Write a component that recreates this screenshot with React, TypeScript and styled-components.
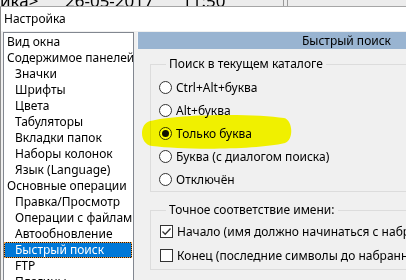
import React from "react";
import styled, { createGlobalStyle } from "styled-components";

const GlobalStyle = createGlobalStyle`
  html, body { margin: 0; padding: 0; background: #f0f0f0; }
  body { font-family: "Noto Sans", "Open Sans", sans-serif; font-size: 12px; color: #000; }
  #root { width: 406px; height: 280px; overflow: hidden; }
`;

const Page = styled.div`
  position: relative;
  width: 406px;
  height: 280px;
  overflow: hidden;
  display: flex;
  flex-direction: column;
  background: #f0f0f0;
`;

const TopStrip = styled.div`
  height: 6px;
  flex: none;
  background: #ececec;
  border-bottom: 1px solid #a6a6a6;
  display: flex;
  align-items: flex-end;
  overflow: hidden;
`;

const StripText = styled.span<{ $w: number }>`
  flex: none;
  width: ${(p) => p.$w}px;
  font-family: "Noto Sans", sans-serif;
  font-size: 17px;
  line-height: 10px;
  height: 10px;
  white-space: nowrap;
  overflow: hidden;
`;

const StripDivider = styled.div`
  flex: none;
  width: 3px;
  height: 6px;
  border-left: 1px solid #9a9a9a;
  border-right: 1px solid #9a9a9a;
`;

const Dialog = styled.div`
  flex: 1;
  display: flex;
  flex-direction: column;
  border-left: 1px solid #8c8c8c;
  min-height: 0;
`;

const TitleBar = styled.div`
  height: 24px;
  flex: none;
  background: #ffffff;
  display: flex;
  align-items: center;
  padding-left: 3px;
  padding-bottom: 1px;
  box-sizing: border-box;
  font-size: 12px;
`;

const Body = styled.div`
  flex: 1;
  display: flex;
  padding: 1px 0 0 2px;
  gap: 3px;
  min-height: 0;
`;

const Tree = styled.div`
  width: 131px;
  flex: none;
  background: #ffffff;
  border: 1px solid #828790;
  border-bottom: none;
  box-sizing: border-box;
  padding-top: 1px;
  overflow: hidden;
  display: flex;
  flex-direction: column;
`;

const TreeItem = styled.div<{ $level: number; $selected?: boolean }>`
  flex: none;
  height: 16px;
  line-height: 14px;
  box-sizing: border-box;
  margin-right: 1px;
  padding-left: ${(p) => (p.$level ? 10 : 2)}px;
  white-space: nowrap;
  border: 1px solid transparent;
  color: ${(p) => (p.$selected ? "#ffffff" : "#000000")};
  ${(p) =>
    p.$selected
      ? `border: 1px dotted #f5a040;
         background: linear-gradient(#0078d7, #0078d7) padding-box, #1a1a1a border-box;`
      : ""}
`;

const Right = styled.div`
  flex: 1;
  min-width: 0;
  display: flex;
  flex-direction: column;
  overflow: hidden;
`;

const Header = styled.div`
  height: 17px;
  flex: none;
  background: #99b4d1;
  border-left: 1px solid #f4f6f9;
  display: flex;
  align-items: center;
  justify-content: flex-end;
  padding-right: 15px;
  font-size: 12px;
`;

const Content = styled.div`
  padding-left: 13px;
  display: flex;
  flex-direction: column;
`;

const Group = styled.fieldset<{ $top: number; $bottom: number }>`
  margin: ${(p) => p.$top}px 0 0 0;
  padding: 0 0 ${(p) => p.$bottom}px 8px;
  width: 320px;
  flex: none;
  border: 1px solid #dcdcdc;
  box-sizing: border-box;
  display: flex;
  flex-direction: column;
`;

const Legend = styled.legend`
  padding: 0 3px;
  margin-left: 7px;
  line-height: 16px;
  font-size: 12px;
`;

const Spacer = styled.div<{ $h: number }>`
  height: ${(p) => p.$h}px;
  flex: none;
`;

const OptionRow = styled.div<{ $h: number }>`
  height: ${(p) => p.$h}px;
  display: flex;
  align-items: center;
  white-space: nowrap;
  gap: 4px;
`;

const Radio = styled.span<{ $checked?: boolean }>`
  width: 13px;
  height: 13px;
  box-sizing: border-box;
  border: 1px solid #333333;
  border-radius: 50%;
  background: #ffffff;
  flex: none;
  display: flex;
  align-items: center;
  justify-content: center;
  &::after {
    content: "";
    display: ${(p) => (p.$checked ? "block" : "none")};
    width: 7px;
    height: 7px;
    border-radius: 50%;
    background: #111111;
  }
`;

const Check = styled.span`
  width: 13px;
  height: 13px;
  box-sizing: border-box;
  border: 1px solid #333333;
  background: #ffffff;
  flex: none;
  margin-left: 1px;
  display: flex;
  align-items: center;
  justify-content: center;
`;

const Highlight = styled.svg`
  position: absolute;
  left: 0;
  top: 0;
  width: 406px;
  height: 280px;
  pointer-events: none;
  mix-blend-mode: multiply;
`;

const treeItems: { label: string; level: number; selected?: boolean }[] = [
  { label: "Вид окна", level: 0 },
  { label: "Содержимое панелей", level: 0 },
  { label: "Значки", level: 1 },
  { label: "Шрифты", level: 1 },
  { label: "Цвета", level: 1 },
  { label: "Табуляторы", level: 1 },
  { label: "Вкладки папок", level: 1 },
  { label: "Наборы колонок", level: 1 },
  { label: "Язык (Language)", level: 1 },
  { label: "Основные операции", level: 0 },
  { label: "Правка/Просмотр", level: 1 },
  { label: "Операции с файлами", level: 1 },
  { label: "Автообновление", level: 1 },
  { label: "Быстрый поиск", level: 1, selected: true },
  { label: "FTP", level: 1 },
  { label: "Плагины", level: 1 },
];

const radios = [
  { label: "Ctrl+Alt+буква", checked: false },
  { label: "Alt+буква", checked: false },
  { label: "Только буква", checked: true },
  { label: "Буква (с диалогом поиска)", checked: false },
  { label: "Отключён", checked: false },
];

const checks = [
  { label: "Начало (имя должно начинаться с набранных символов)", checked: true },
  { label: "Конец (последние символы до набранной точки)", checked: false },
];

export default function App() {
  return (
    <>
      <GlobalStyle />
      <Page>
        <TopStrip>
          <StripText $w={65}>ика&gt;</StripText>
          <StripText $w={117}>26-05-2017</StripText>
          <StripText $w={101}>11:50</StripText>
          <StripDivider />
        </TopStrip>
        <Dialog>
          <TitleBar>Настройка</TitleBar>
          <Body>
            <Tree>
              {treeItems.map((t) => (
                <TreeItem key={t.label} $level={t.level} $selected={t.selected}>
                  {t.label}
                </TreeItem>
              ))}
            </Tree>
            <Right>
              <Header>Быстрый поиск</Header>
              <Content>
                <Group $top={7} $bottom={0}>
                  <Legend>Поиск в текущем каталоге</Legend>
                  <Spacer $h={4} />
                  {radios.map((r) => (
                    <OptionRow key={r.label} $h={23}>
                      <Radio $checked={r.checked} />
                      {r.label}
                    </OptionRow>
                  ))}
                </Group>
                <Group $top={10} $bottom={2}>
                  <Legend>Точное соответствие имени:</Legend>
                  <Spacer $h={1} />
                  {checks.map((c) => (
                    <OptionRow key={c.label} $h={24}>
                      <Check>
                        {c.checked && (
                          <svg width="11" height="11" viewBox="0 0 11 11">
                            <path d="M1.5 5.5 L4.2 8.2 L9.5 2.5" fill="none" stroke="#333" strokeWidth="1.3" />
                          </svg>
                        )}
                      </Check>
                      {c.label}
                    </OptionRow>
                  ))}
                </Group>
              </Content>
            </Right>
          </Body>
        </Dialog>
        <Highlight viewBox="0 0 406 280">
          <path
            d="M150 121 C175 114 255 113 284 118 C293 120 294 140 285 143 C255 150 185 150 152 146 C139 144 139 124 150 121 Z"
            fill="#ffff00"
          />
        </Highlight>
      </Page>
    </>
  );
}
